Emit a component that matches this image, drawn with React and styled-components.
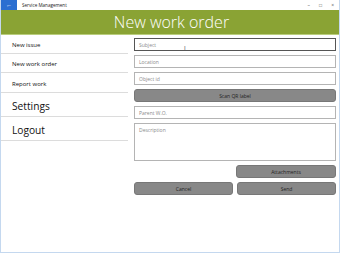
import React from "react";
import styled, { createGlobalStyle } from "styled-components";

const Global = createGlobalStyle`
  html, body { margin: 0; padding: 0; background: #fff; }
  body { font-family: "Open Sans", "Noto Sans", sans-serif; }
  * { box-sizing: border-box; }
`;

const Window = styled.div`
  width: 340px;
  height: 253px;
  border: 1px solid #c4d8ef;
  border-top: none;
  display: flex;
  flex-direction: column;
  overflow: hidden;
`;

const TitleBar = styled.div`
  height: 10px;
  display: flex;
  align-items: center;
  background: #fff;
`;

const BackBtn = styled.div`
  width: 16px;
  height: 10px;
  background: #2b6fd1;
  color: #fff;
  font-size: 6px;
  display: flex;
  align-items: center;
  justify-content: center;
  line-height: 1;
`;

const AppTitle = styled.div`
  font-size: 4.6px;
  color: #222;
  margin-left: 5px;
  flex: 1;
`;

const Controls = styled.div`
  display: flex;
  gap: 9px;
  margin-right: 5px;
  font-size: 5px;
  color: #555;
`;

const Header = styled.div`
  height: 25px;
  background: #8aa334;
  border-bottom: 1px solid #b9cd7c;
  color: #fff;
  font-size: 16px;
  font-weight: 300;
  display: flex;
  align-items: center;
  justify-content: center;
  padding-left: 3px;
`;

const Body = styled.div`
  flex: 1;
  display: flex;
`;

const Nav = styled.nav`
  width: 127px;
  display: flex;
  flex-direction: column;
`;

const NavItem = styled.div`
  height: ${p => p.$h}px;
  border-bottom: 1px solid #dcdcdc;
  display: flex;
  align-items: center;
  padding-left: 11px;
  padding-top: ${p => (p.$big ? 3 : 2)}px;
  font-size: ${p => (p.$big ? 10.2 : 6)}px;
  color: #111;
`;

const Form = styled.div`
  flex: 1;
  margin-left: 6px;
  margin-right: 3px;
  display: flex;
  flex-direction: column;
  gap: 4px;
  margin-top: 3px;
`;

const Field = styled.div`
  height: ${p => (p.$tall ? 38 : 13)}px;
  border: 1px solid ${p => (p.$focus ? "#555" : "#b4b4b4")};
  border-width: ${p => (p.$focus ? 1.5 : 1)}px;
  font-size: 5px;
  color: #8a8a8a;
  padding: ${p => (p.$tall ? "3px 4px" : "0 4px")};
  display: flex;
  align-items: ${p => (p.$tall ? "flex-start" : "center")};
  position: relative;
`;

const Cursor = styled.span`
  position: absolute;
  left: 49px;
  top: 5px;
  font-size: 6px;
  color: #444;
`;

const Button = styled.div`
  height: 13px;
  background: #888;
  border: 1px solid #777;
  border-radius: 3px;
  font-size: 5px;
  color: #222;
  display: flex;
  align-items: center;
  justify-content: center;
  flex: ${p => (p.$half ? 1 : "none")};
`;

const Row = styled.div`
  display: flex;
  gap: 4px;
  justify-content: flex-end;
`;

const Spacer = styled.div`
  flex: 1;
`;

export default function App() {
  return (
    <>
      <Global />
      <Window>
        <TitleBar>
          <BackBtn>←</BackBtn>
          <AppTitle>Service Management</AppTitle>
          <Controls>
            <span>–</span>
            <span>□</span>
            <span>×</span>
          </Controls>
        </TitleBar>
        <Header>New work order</Header>
        <Body>
          <Nav>
            <NavItem $h={19}>New issue</NavItem>
            <NavItem $h={19}>New work order</NavItem>
            <NavItem $h={20}>Report work</NavItem>
            <NavItem $h={24} $big>Settings</NavItem>
            <NavItem $h={24} $big>Logout</NavItem>
          </Nav>
          <Form>
            <Field $focus>Subject<Cursor>I</Cursor></Field>
            <Field>Location</Field>
            <Field>Object id</Field>
            <Button>Scan QR label</Button>
            <Field>Parent W.O.</Field>
            <Field $tall>Description</Field>
            <Row>
              <Spacer />
              <Button $half>Attachments</Button>
            </Row>
            <Row>
              <Button $half>Cancel</Button>
              <Button $half>Send</Button>
            </Row>
          </Form>
        </Body>
      </Window>
    </>
  );
}
